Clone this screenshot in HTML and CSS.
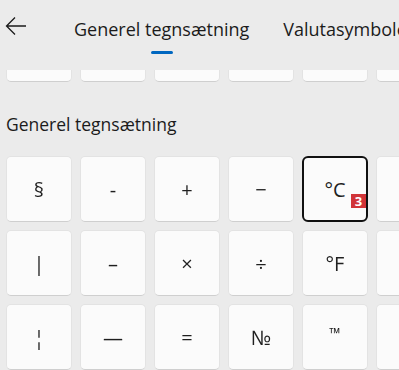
FILE: index.html
```html
<!DOCTYPE html>
<html lang="da">
<head>
    <meta charset="UTF-8">
    <title>Symboler</title>
    <link rel="stylesheet" href="styles.css">
</head>
<body>
    <header class="top-bar">
        <button class="back-btn" aria-label="Tilbage">
            <svg width="24" height="24" viewBox="0 0 24 24"><path d="M22 12H3M11 3.5L2.5 12L11 20.5" fill="none" stroke="#1b1b1b" stroke-width="1.3"/></svg>
        </button>
        <nav class="tabs">
            <span class="tab active">Generel tegnsætning</span>
            <span class="tab">Valutasymboler</span>
        </nav>
    </header>
    <main class="scroll">
        <div class="grid partial">
            <div class="key"></div><div class="key"></div><div class="key"></div>
            <div class="key"></div><div class="key"></div><div class="key"></div>
        </div>
        <h2 class="section-title">Generel tegnsætning</h2>
        <div class="grid">
            <div class="key">§</div>
            <div class="key">-</div>
            <div class="key">+</div>
            <div class="key">−</div>
            <div class="key focused">°C<span class="badge">3</span></div>
            <div class="key"></div>
            <div class="key">|</div>
            <div class="key">–</div>
            <div class="key">×</div>
            <div class="key">÷</div>
            <div class="key">°F</div>
            <div class="key"></div>
            <div class="key">¦</div>
            <div class="key">—</div>
            <div class="key">=</div>
            <div class="key">№</div>
            <div class="key small">™</div>
            <div class="key"></div>
        </div>
    </main>
</body>
</html>
```

FILE: styles.css
```css
html, body {
    margin: 0;
    height: 370px;
    overflow: hidden;
    background-color: #ebebeb;
    font-family: "Open Sans", "Noto Sans", sans-serif;
    color: #1b1b1b;
}
.top-bar {
    height: 70px;
    display: flex;
    align-items: flex-start;
}
.back-btn {
    background: none;
    border: none;
    padding: 0;
    margin: 14px 0 0 4px;
    width: 24px;
    height: 24px;
    cursor: pointer;
}
.tabs {
    display: flex;
    gap: 34px;
    margin-left: 46px;
    padding-top: 15px;
    white-space: nowrap;
}
.tab {
    position: relative;
    font-size: 18px;
    line-height: 28px;
}
.tab.active::after {
    content: "";
    position: absolute;
    left: 50%;
    top: 36px;
    width: 22px;
    height: 3px;
    margin-left: -11px;
    border-radius: 2px;
    background-color: #0067c0;
}
.scroll {
    height: 300px;
    overflow: hidden;
}
.grid {
    display: grid;
    grid-template-columns: repeat(6, 66px);
    grid-auto-rows: 66px;
    gap: 8px;
    padding-left: 6px;
}
.grid.partial {
    margin-top: -54px;
}
.section-title {
    font-size: 17.5px;
    font-weight: normal;
    line-height: 24px;
    margin: 30px 0 20px 6px;
}
.key {
    position: relative;
    display: flex;
    align-items: center;
    justify-content: center;
    box-sizing: border-box;
    background-color: #fbfbfb;
    border: 1px solid #e3e3e3;
    border-bottom-color: #cfcfcf;
    border-radius: 5px;
    font-size: 20px;
    color: #1f1f1f;
}
.key:not(.focused) {
    filter: grayscale(1);
}
.key.small {
    font-size: 15px;
    padding-bottom: 8px;
}
.key.focused {
    border: 2px solid #111;
    border-radius: 6px;
}
.badge {
    position: absolute;
    right: 0;
    bottom: 12px;
    width: 15px;
    height: 14px;
    background-color: #d13438;
    color: #fff;
    font-size: 13px;
    font-weight: bold;
    line-height: 14px;
    text-align: center;
}
```
